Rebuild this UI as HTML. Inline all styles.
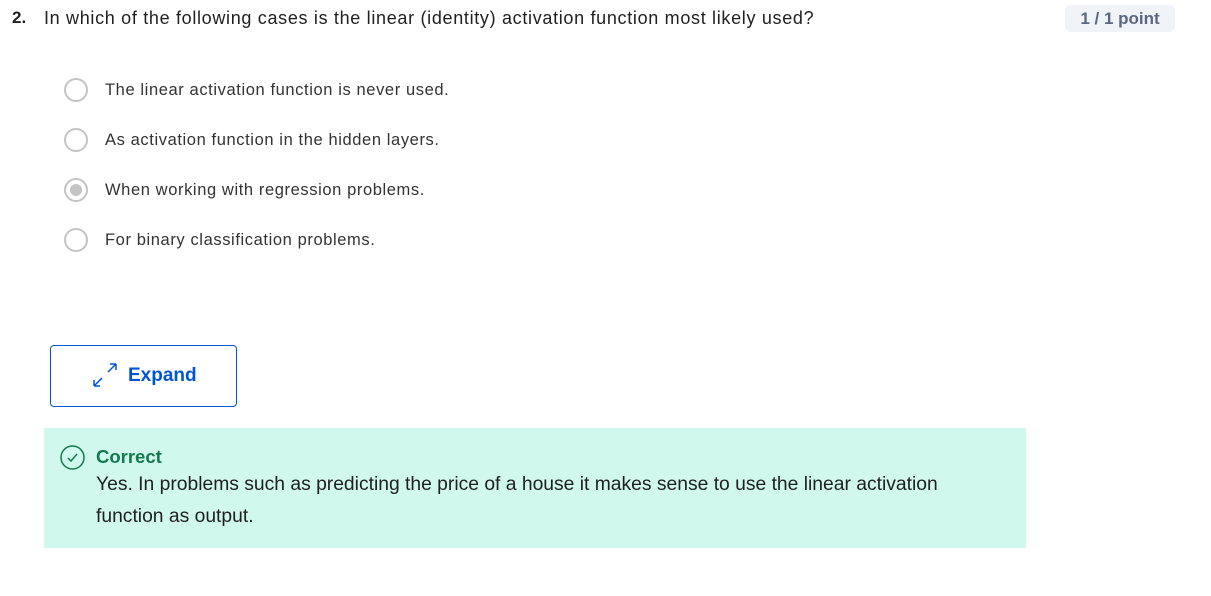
<!DOCTYPE html>
<html><head><style>
body{margin:0;width:1211px;height:596px;background:#fff;font-family:"Liberation Sans",sans-serif;color:#1f1f1f;position:relative;overflow:hidden}
.a{position:absolute;white-space:nowrap}
.r{position:absolute;left:64px;width:24px;height:24px;border:2px solid #c4c4c4;border-radius:50%;box-sizing:border-box}
.opt{position:absolute;left:105px;font-size:16.5px;letter-spacing:0.6px;color:#333}
</style></head><body>
<div class="a" style="left:12px;top:8px;font-size:17px;font-weight:bold">2.</div>
<div class="a" style="left:44px;top:8px;font-size:18px;letter-spacing:0.68px">In which of the following cases is the linear (identity) activation function most likely used?</div>
<div class="a" style="left:1065px;top:5px;width:110px;height:27px;background:#f0f3f8;border-radius:5px;color:#5b6780;font-weight:bold;font-size:17px;text-align:center;line-height:27px">1 / 1 point</div>
<div class="r" style="top:78px"></div><div class="opt" style="top:81px">The linear activation function is never used.</div>
<div class="r" style="top:128px"></div><div class="opt" style="top:131px">As activation function in the hidden layers.</div>
<div class="r" style="top:178px"><div style="position:absolute;left:4px;top:4px;width:12px;height:12px;border-radius:50%;background:#c4c4c4"></div></div><div class="opt" style="top:181px">When working with regression problems.</div>
<div class="r" style="top:228px"></div><div class="opt" style="top:231px">For binary classification problems.</div>
<div class="a" style="left:50px;top:345px;width:187px;height:62px;border:1px solid #0056d2;border-radius:4px;box-sizing:border-box"></div>
<svg class="a" style="left:92px;top:362px" width="26" height="26" viewBox="0 0 26 26" fill="none" stroke="#0056d2" stroke-width="1.5"><path d="M2 24L10 16M2 24h6M2 24v-6M16 10L24 2M24 2h-6M24 2v6"/></svg>
<div class="a" style="left:128px;top:365px;font-size:19px;font-weight:bold;color:#0056d2">Expand</div>
<div class="a" style="left:44px;top:428px;width:982px;height:120px;background:#d0f8ed"></div>
<svg class="a" style="left:60px;top:445px" width="25" height="25" viewBox="0 0 25 25" fill="none" stroke="#137a4f" stroke-width="1.5"><circle cx="12.5" cy="12.5" r="11.5"/><path d="M8 13l3 3 6-7"/></svg>
<div class="a" style="left:96px;top:446px;font-size:18.5px;font-weight:bold;color:#137a4f">Correct</div>
<div class="a" style="left:96px;top:474px;font-size:19.3px;color:#1f1f1f">Yes. In problems such as predicting the price of a house it makes sense to use the linear activation</div>
<div class="a" style="left:96px;top:506px;font-size:19.3px;color:#1f1f1f">function as output.</div>
</body></html>
